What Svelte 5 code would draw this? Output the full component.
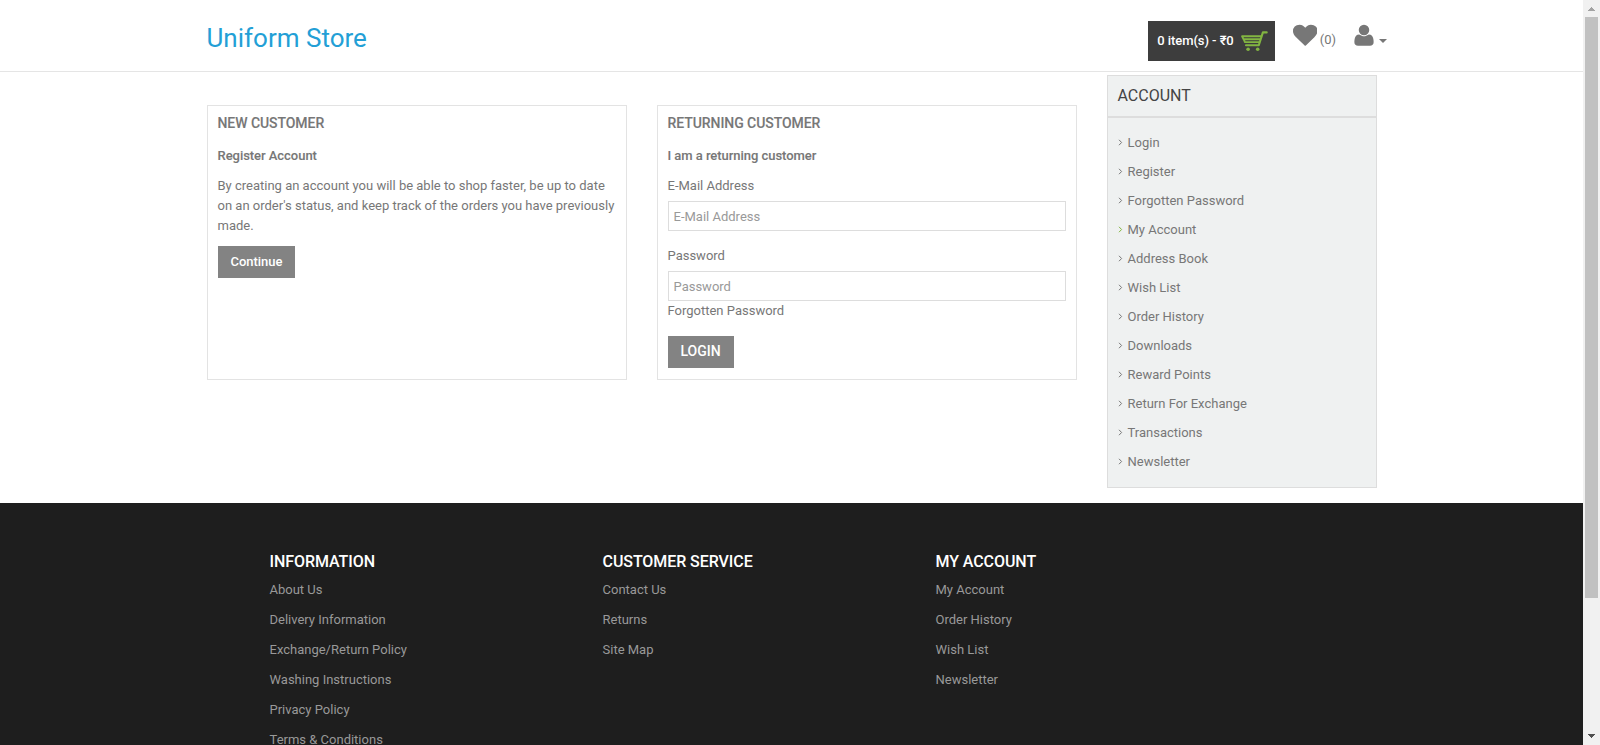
<script>
  const accountLinks = ['Login', 'Register', 'Forgotten Password', 'My Account', 'Address Book', 'Wish List', 'Order History', 'Downloads', 'Reward Points', 'Return For Exchange', 'Transactions', 'Newsletter'];
  const footerColumns = [
    { title: 'Information', links: ['About Us', 'Delivery Information', 'Exchange/Return Policy', 'Washing Instructions', 'Privacy Policy', 'Terms & Conditions'] },
    { title: 'Customer Service', links: ['Contact Us', 'Returns', 'Site Map'] },
    { title: 'My Account', links: ['My Account', 'Order History', 'Wish List', 'Newsletter'] }
  ];
</script>

<div class="window">
  <div class="page">
    <header>
      <div class="container bar">
        <h1>Uniform Store</h1>
        <div class="tools">
          <button class="cart">
            <span>0 item(s) - ₹0</span>
            <svg width="28" height="23" viewBox="0 0 28 23" fill="none" stroke="#82b541" stroke-linecap="round" stroke-linejoin="round">
              <path d="M25.7 3.4h-3.8L17.8 16.3H5" stroke-width="2.1" />
              <path d="M1.1 7.3h19M2.6 10.2h16.2M3.8 13.1h14.2M1.1 7.3l2.9 5.8" stroke-width="1.9" />
              <circle cx="7.1" cy="20.2" r="1.8" fill="#82b541" stroke="none" />
              <circle cx="16.7" cy="20.2" r="1.8" fill="#82b541" stroke="none" />
            </svg>
          </button>
          <a class="wish" href="#wishlist">
            <svg width="24.5" height="24.5" viewBox="0 0 1792 1792"><path d="M896 1664q-26 0-44-18l-624-602q-10-8-27.5-26t-55.5-65.5-68-97.5-53.5-121-23.5-138q0-220 127-344t351-124q62 0 126.5 21.5t120 58 95.5 68.5 76 68q36-36 76-68t95.5-68.5 120-58 126.5-21.5q224 0 351 124t127 344q0 221-229 450l-623 600q-18 18-44 18z" /></svg>
            <span>(0)</span>
          </a>
          <a class="user" href="#account" aria-label="My Account">
            <svg width="20" height="24.5" viewBox="192 0 1408 1792"><path d="M1600 1405q0 120-73 189.5t-194 69.5h-874q-121 0-194-69.5t-73-189.5q0-53 3.5-103.5t14-109 26.5-108.5 43-97.5 62-81 85.5-53.5 111.5-20q9 0 42 21.5t74.5 48 108 48 133.5 21.5 133.5-21.5 108-48 74.5-48 42-21.5q61 0 111.5 20t85.5 53.5 62 81 43 97.5 26.5 108.5 14 109 3.5 103.5zm-320-893q0 159-112.5 271.5t-271.5 112.5-271.5-112.5-112.5-271.5 112.5-271.5 271.5-112.5 271.5 112.5 112.5 271.5z" /></svg>
            <i class="caret"></i>
          </a>
        </div>
      </div>
    </header>

    <main class="container">
      <section class="well">
        <h2>New Customer</h2>
        <p class="lead">Register Account</p>
        <p class="copy">By creating an account you will be able to shop faster, be up to date on an order's status, and keep track of the orders you have previously made.</p>
        <button class="btn">Continue</button>
      </section>
      <section class="well">
        <h2>Returning Customer</h2>
        <p class="lead">I am a returning customer</p>
        <div class="field">
          <label for="email">E-Mail Address</label>
          <input id="email" type="text" placeholder="E-Mail Address" />
        </div>
        <div class="field">
          <label for="password">Password</label>
          <input id="password" type="password" placeholder="Password" />
          <a href="#forgotten">Forgotten Password</a>
        </div>
        <button class="btn login">LOGIN</button>
      </section>
      <aside>
        <h3>Account</h3>
        <ul>
          {#each accountLinks as link}
            <li class:active={link === 'My Account'}>
              <svg width="5" height="7" viewBox="0 0 5 7"><path d="M1 .8l2.6 2.7L1 6.2" /></svg>
              <a href="#account">{link}</a>
            </li>
          {/each}
        </ul>
      </aside>
    </main>

    <footer>
      {#each footerColumns as column}
        <div class="column">
          <h5>{column.title}</h5>
          <ul>
            {#each column.links as link}
              <li><a href="#info">{link}</a></li>
            {/each}
          </ul>
        </div>
      {/each}
    </footer>
  </div>

  <div class="scrollbar">
    <svg width="7" height="4" viewBox="0 0 7 4" shape-rendering="crispEdges"><path d="M3 0h1v1h1v1h1v1h1v1H0V3h1V2h1V1h1z" fill="#a3a3a3" /></svg>
    <div class="thumb"></div>
    <svg width="7" height="4" viewBox="0 0 7 4" shape-rendering="crispEdges"><path d="M0 0h7v1H6v1H5v1H4v1H3V3H2V2H1V1H0z" fill="#505050" /></svg>
  </div>
</div>

<style>
  :global(body) { margin: 0; overflow: hidden; background: #fff; }
  .window { display: flex; height: 745px; overflow: hidden; font: 13px/20px Roboto, sans-serif; color: #777; }
  .window :is(h1, h2, h3, h5, p, ul) { margin: 0; padding: 0; list-style: none; }
  a { color: inherit; text-decoration: none; }
  button { font-family: inherit; border: 0; border-radius: 0; margin: 0; }
  .page { width: 1583px; height: 745px; overflow: hidden; display: flex; flex-direction: column; }
  .container { width: 1170px; margin: 0 auto; }
  header { height: 71px; flex: none; border-bottom: 1px solid #e5e5e5; }
  .bar { display: flex; justify-content: space-between; }
  h1 { font-size: 26px; line-height: 36px; font-weight: 400; color: #239fd6; padding-top: 20px !important; }
  .tools { display: flex; align-items: flex-start; margin-right: -10px; }
  .cart { display: flex; align-items: center; justify-content: space-between; box-sizing: border-box; margin-top: 21px; width: 127px; height: 40px; padding: 0 6px 2px 9px; background: #3d3d3d; color: #fff; font-size: 13px; font-weight: 500; letter-spacing: -0.06px; white-space: nowrap; }
  .wish, .user { display: flex; align-items: flex-start; height: 40px; }
  .wish { margin: 23px 0 0 17.5px; }
  .wish span { margin: 7px 0 0 2.5px; }
  .user { margin: 23px 0 0 17.5px; }
  .wish svg, .user svg { fill: #777; display: block; flex: none; }
  .caret { margin: 16px 0 0 5px; border: 4px solid transparent; border-top-color: #777; border-bottom: 0; }
  main { display: flex; align-items: flex-start; gap: 30px; height: 431px; flex: none; }
  .well { box-sizing: border-box; width: 420px; height: 275px; margin-top: 33px; border: 1px solid #e3e3e3; padding: 7px 10px 0; }
  h2 { font-size: 14px; line-height: 20px; font-weight: 500; letter-spacing: -0.06px; -webkit-text-stroke: 0.1px; text-transform: uppercase; }
  .lead { font-weight: 500; letter-spacing: -0.04px; -webkit-text-stroke: 0.1px; padding: 13px 0 10px !important; }
  .copy { padding-bottom: 10px !important; }
  .btn { height: 32px; padding: 0 12.5px 2px 13px; background: #838383; color: #fff; font-size: 13px; font-weight: 500; letter-spacing: -0.03px; }
  .btn.login { font-size: 14px; padding-right: 13px; }
  .field { display: flex; flex-direction: column; margin-bottom: 15px; }
  input { height: 30px; box-sizing: border-box; margin: 5px 0 0; padding: 0 5px; border: 1px solid #ddd; border-radius: 0; background: #fff; font: 13px Roboto, sans-serif; }
  input::placeholder { color: #999; opacity: 1; }
  aside { box-sizing: border-box; width: 270px; height: 413px; margin-top: 3px; border: 1px solid #ddd; background: #eff1f1; }
  h3 { height: 40px; border-bottom: 2px solid #ddd; font-size: 16px; line-height: 39px; font-weight: 400; color: #444; text-transform: uppercase; padding-left: 10px !important; }
  aside ul { padding: 10px 0 0 10.5px !important; }
  aside li { height: 29px; display: flex; align-items: center; gap: 4.5px; }
  aside li svg { fill: none; stroke: #777; stroke-width: 1; }
  aside li.active svg { stroke: #82b541; }
  footer { flex: 1; display: flex; background: #1e1e1e; padding: 49px 0 0 269.5px; color: #999; overflow: hidden; }
  .column { width: 333px; flex: none; }
  h5 { font-size: 16px; line-height: 20px; font-weight: 500; letter-spacing: -0.07px; color: #fff; text-transform: uppercase; }
  footer ul { padding-top: 3px !important; }
  footer li { height: 30px; line-height: 30px; }
  .scrollbar { width: 17px; flex: none; display: flex; flex-direction: column; align-items: center; background: #f1f1f1; box-sizing: border-box; padding: 7px 0; }
  .thumb { width: 13px; height: 581px; background: #c1c1c1; margin: 6px 0 auto; }
</style>
